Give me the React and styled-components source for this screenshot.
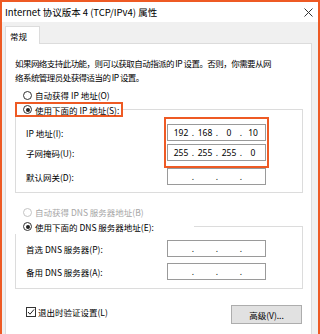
import React from "react"
import styled, { createGlobalStyle } from "styled-components"

const ORANGE = "#ee5a24"
const LINE = "#dcdcdc"

const GlobalStyle = createGlobalStyle`
  html, body {
    margin: 0;
    padding: 0;
    background: #fff;
  }
  body {
    font-family: "Noto Sans CJK SC", "Noto Sans", sans-serif;
    font-size: 8.5px;
    color: #000;
  }
`

const Window = styled.div`
  width: 320px;
  height: 334px;
  box-sizing: border-box;
  border: 2px solid ${ORANGE};
  border-bottom: none;
  background: #f0f0f0;
  overflow: hidden;
  display: flex;
  flex-direction: column;
`

const TitleBar = styled.div`
  flex: 0 0 20px;
  background: #fff;
  display: flex;
  align-items: center;
  justify-content: space-between;
  padding: 0 5px 0 3px;
  font-size: 9.5px;
`

const Body = styled.div`
  flex: 1;
  display: flex;
  flex-direction: column;
  padding: 4px 6px 0 3px;
`

const TabStrip = styled.div`
  display: flex;
`

const Tab = styled.div`
  width: 35px;
  height: 18px;
  box-sizing: border-box;
  background: #fff;
  border: 1px solid ${LINE};
  border-bottom: none;
  margin-bottom: -1px;
  position: relative;
  padding-left: 4px;
  display: flex;
  align-items: center;
`

const Panel = styled.div`
  flex: 1;
  background: #fff;
  border: 1px solid ${LINE};
  border-bottom: none;
  padding: 12px 8px 0 9px;
  display: flex;
  flex-direction: column;
`

const Intro = styled.p`
  margin: 0 0 4px;
  line-height: 14px;
  letter-spacing: -0.55px;
  white-space: nowrap;
`

const RadioRow = styled.div`
  display: flex;
  align-items: center;
  gap: 3px;
  height: 14px;
  padding-left: 8px;
  color: ${(p) => (p.disabled ? "#a6a6a6" : "#000")};
`

const RadioDot = styled.span`
  width: 9px;
  height: 9px;
  box-sizing: border-box;
  border-radius: 50%;
  border: 1px solid ${(p) => (p.disabled ? "#c4c4c4" : "#333")};
  display: flex;
  align-items: center;
  justify-content: center;
  background: #fff;
  &::after {
    content: "";
    display: ${(p) => (p.checked ? "block" : "none")};
    width: 4px;
    height: 4px;
    border-radius: 50%;
    background: #222;
  }
`

const Group = styled.fieldset`
  margin: 0;
  padding: 0;
  border: 1px solid ${LINE};
  min-inline-size: 0;
`

const Legend = styled.legend`
  margin-left: -1px;
  padding: 0 ${(p) => p.$tail}px 0 0;
  border: 2px solid ${(p) => (p.$marked ? ORANGE : "transparent")};
  background: #fff;
  & > div {
    padding-left: 6px;
    height: 11px;
  }
`

const Rows = styled.div`
  display: grid;
  grid-template-columns: 141px 99px;
  align-items: center;
  padding: ${(p) => p.$top}px 0 ${(p) => p.$bottom}px 10px;
  row-gap: ${(p) => p.$gap}px;
`

const Marked = styled.div`
  grid-column: 2;
  grid-row: span 2;
  display: flex;
  flex-direction: column;
  gap: ${(p) => p.$gap}px;
  position: relative;
  &::after {
    content: "";
    position: absolute;
    inset: -7px -3px -7px -3px;
    border: 2px solid ${ORANGE};
    pointer-events: none;
  }
`

const FieldLabel = styled.div`
  grid-column: 1;
  height: 17px;
  display: flex;
  align-items: center;
  margin-top: ${(p) => p.$push || 0}px;
`

const IpBox = styled.div`
  grid-column: 2;
  width: 99px;
  height: 17px;
  box-sizing: border-box;
  border: 1px solid #9a9a9a;
  background: #fff;
  display: flex;
  align-items: center;
  padding-left: 2px;
  margin-top: ${(p) => p.$push || 0}px;
  font-family: "Noto Sans", "Noto Sans CJK SC", sans-serif;
  font-size: 8.5px;
`

const Octet = styled.span`
  width: 22px;
  text-align: center;
`

const Dot = styled.span`
  width: 2px;
  display: flex;
  justify-content: center;
`

const Spacer = styled.div`
  height: ${(p) => p.$h}px;
`

const ActionRow = styled.div`
  display: flex;
  align-items: flex-start;
  justify-content: space-between;
  margin-top: 16px;
  padding: 0 1px 0 11px;
`

const CheckLabel = styled.label`
  display: flex;
  align-items: center;
  gap: 2px;
  margin-top: 1px;
`

const CheckBox = styled.span`
  width: 10px;
  height: 10px;
  box-sizing: border-box;
  border: 1px solid #333;
  display: flex;
  align-items: center;
  justify-content: center;
`

const Button = styled.button`
  width: 71px;
  height: 19px;
  box-sizing: border-box;
  background: #e1e1e1;
  border: 1px solid #adadad;
  font-family: inherit;
  font-size: 8.5px;
  color: #000;
  padding: 0;
`

function IpField({ value, push }) {
  const parts = value ? value.split(".") : ["", "", "", ""]
  return (
    <IpBox $push={push}>
      {parts.map((p, i) => (
        <React.Fragment key={i}>
          {i > 0 && <Dot>.</Dot>}
          <Octet>{p}</Octet>
        </React.Fragment>
      ))}
    </IpBox>
  )
}

function Radio({ checked, disabled, children }) {
  return (
    <RadioRow disabled={disabled}>
      <RadioDot checked={checked} disabled={disabled} />
      <span>{children}</span>
    </RadioRow>
  )
}

export default function App() {
  return (
    <>
      <GlobalStyle />
      <Window>
        <TitleBar>
          <span>Internet 协议版本 4 (TCP/IPv4) 属性</span>
          <svg width="9" height="9" viewBox="0 0 9 9">
            <path d="M0.5 0.5 L8.5 8.5 M8.5 0.5 L0.5 8.5" stroke="#333" strokeWidth="1" />
          </svg>
        </TitleBar>
        <Body>
          <TabStrip>
            <Tab>常规</Tab>
          </TabStrip>
          <Panel>
            <Intro>
              如果网络支持此功能，则可以获取自动指派的 IP 设置。否则，你需要从网
              <br />
              络系统管理员处获得适当的 IP 设置。
            </Intro>
            <Radio>自动获得 IP 地址(O)</Radio>
            <Group>
              <Legend $marked $tail={2}>
                <Radio checked>使用下面的 IP 地址(S):</Radio>
              </Legend>
              <Rows $top={7} $bottom={7} $gap={3}>
                <FieldLabel>IP 地址(I):</FieldLabel>
                <Marked $gap={3}>
                  <IpField value="192.168.0.10" />
                  <IpField value="255.255.255.0" />
                </Marked>
                <FieldLabel style={{ gridRow: 2 }}>子网掩码(U):</FieldLabel>
                <FieldLabel $push={4}>默认网关(D):</FieldLabel>
                <IpField push={4} />
              </Rows>
            </Group>
            <Spacer $h={12} />
            <Radio disabled>自动获得 DNS 服务器地址(B)</Radio>
            <Group>
              <Legend $tail={38}>
                <Radio checked>使用下面的 DNS 服务器地址(E):</Radio>
              </Legend>
              <Rows $top={6} $bottom={8} $gap={6}>
                <FieldLabel>首选 DNS 服务器(P):</FieldLabel>
                <IpField />
                <FieldLabel>备用 DNS 服务器(A):</FieldLabel>
                <IpField />
              </Rows>
            </Group>
            <ActionRow>
              <CheckLabel>
                <CheckBox>
                  <svg width="8" height="8" viewBox="0 0 8 8">
                    <path d="M1 4 L3 6.2 L7 1.5" fill="none" stroke="#222" strokeWidth="1" />
                  </svg>
                </CheckBox>
                退出时验证设置(L)
              </CheckLabel>
              <Button>高级(V)...</Button>
            </ActionRow>
          </Panel>
        </Body>
      </Window>
    </>
  )
}
